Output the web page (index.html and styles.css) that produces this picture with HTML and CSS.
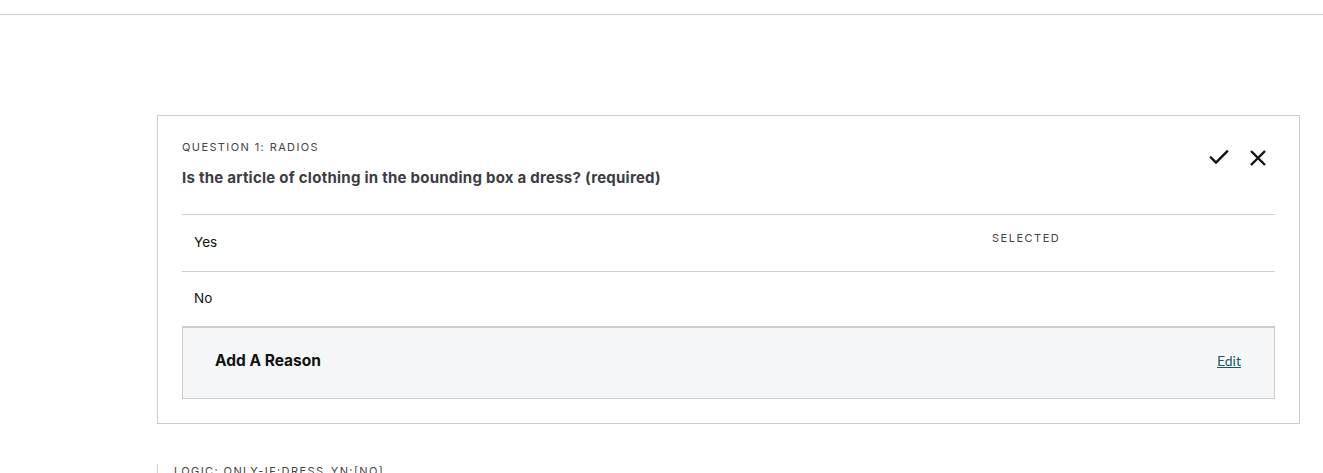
FILE: index.html
```html
<!DOCTYPE html>
<html lang="en">
<head>
<meta charset="utf-8">
<title>Question</title>
<link rel="stylesheet" href="styles.css">
</head>
<body>
<div class="topbar"></div>
<main class="page">
  <section class="card">
    <div class="card-head">
      <div class="head-text">
        <div class="eyebrow">QUESTION 1: RADIOS</div>
        <h2 class="question">Is the article of clothing in the bounding box a dress? (required)</h2>
      </div>
      <div class="actions">
        <button class="icon-btn" aria-label="Accept">
          <svg width="20" height="16" viewBox="0 0 20 16"><path d="M2 8.5 L7 13.5 L18 2.5" fill="none" stroke="#111" stroke-width="2.4" stroke-linecap="square"/></svg>
        </button>
        <button class="icon-btn" aria-label="Close">
          <svg width="18" height="18" viewBox="0 0 18 18"><path d="M2 2 L16 16 M16 2 L2 16" fill="none" stroke="#111" stroke-width="2.4"/></svg>
        </button>
      </div>
    </div>
    <ul class="options">
      <li class="option option-yes"><span class="opt-label">Yes</span><span class="opt-state">SELECTED</span></li>
      <li class="option option-no"><span class="opt-label">No</span><span class="opt-state"></span></li>
    </ul>
    <div class="reason">
      <span class="reason-title">Add A Reason</span>
      <a class="edit" href="#">Edit</a>
    </div>
  </section>
  <div class="logic">LOGIC: ONLY-IF:DRESS_YN:[NO]</div>
</main>
</body>
</html>
```
FILE: styles.css
```css
* { box-sizing: border-box; }
html, body { margin: 0; padding: 0; background: #fff; }
body { font-family: Inter, "Noto Sans", sans-serif; color: #222; }
.topbar { height: 15px; border-bottom: 1px solid #cfcfcf; }
.page { padding: 100px 23px 0 157px; }
.card { border: 1px solid #cccccc; padding: 24px 24px 24px 24px; }
.card-head { display: flex; justify-content: space-between; align-items: flex-start; padding-bottom: 25px; border-bottom: 1px solid #d0d0d0; }
.eyebrow { font-size: 11px; line-height: 14px; letter-spacing: 1.4px; color: #444; }
.question { margin: 13px 0 0; font-size: 15px; line-height: 22px; font-weight: 700; color: #3c3c42; letter-spacing: 0.25px; }
.actions { display: flex; gap: 20px; padding: 9px 8px 0 0; }
.icon-btn { border: 0; background: none; padding: 0; margin: 0; display: flex; cursor: pointer; }
.options { list-style: none; margin: 0; padding: 0; }
.option { display: flex; align-items: flex-start; padding: 17px 12px 19px; font-size: 13.5px; line-height: 20px; color: #111; }
.option + .option { border-top: 1px solid #d0d0d0; padding: 16px 12px 18px; }
.opt-label { flex: 1; }
.opt-state { width: 271px; margin-top: -1px; font-size: 11px; line-height: 14px; letter-spacing: 1.5px; color: #444; }
.reason { display: flex; justify-content: space-between; align-items: center; background: #f6f7f9; border: 1px solid #cccccc; border-top: 2px solid #cccccc; padding: 22px 33px 26px 32px; }
.reason-title { font-size: 15.5px; line-height: 22px; font-weight: 700; color: #111; }
.edit { font-family: Lato, "Noto Sans", sans-serif; font-size: 14px; line-height: 22px; color: #1d5a69; text-decoration: underline; }
.logic { margin-top: 40px; border-left: 1px solid #cccccc; padding-left: 16px; font-size: 11px; line-height: 14px; letter-spacing: 1.4px; color: #444; }
```
